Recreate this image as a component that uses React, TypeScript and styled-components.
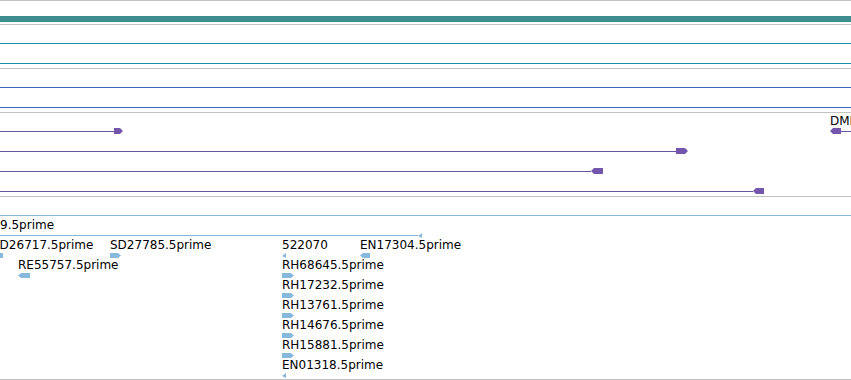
import React from 'react';
import styled, { createGlobalStyle } from 'styled-components';

type Shape = 'right' | 'left' | 'tri' | 'box';

interface Glyph {
    x: number;
    w: number;
    shape: Shape;
}

interface RowData {
    lines?: [number, number][];
    glyphs?: Glyph[];
    labels?: { x: number; text: string }[];
}

interface TrackData {
    id: string;
    color: string;
    glyphColor: string;
    glyphTop: number;
    glyphHeight: number;
    pad: number;
    rows: RowData[];
}

const GlobalStyle = createGlobalStyle`
  html, body {
    margin: 0;
    padding: 0;
    background: #ffffff;
    overflow: hidden;
  }
  body {
    font-family: "DejaVu Sans", "Liberation Sans", sans-serif;
    font-size: 12px;
    color: #000000;
  }
`;

const Browser = styled.div`
  width: 851px;
  height: 380px;
  overflow: hidden;
  display: flex;
  flex-direction: column;
`;

const Track = styled.div<{ $pad: number }>`
  border-top: 1px solid #c2c2c2;
  padding-bottom: ${({ $pad }) => $pad}px;
  display: flex;
  flex-direction: column;
`;

const Row = styled.div`
  position: relative;
  height: 20px;
`;

const Line = styled.div<{ $color: string }>`
  position: absolute;
  top: 18px;
  height: 1px;
  background: ${({ $color }) => $color};
`;

const shapes: Record<Shape, string> = {
    right: 'polygon(0 0, calc(100% - 3px) 0, 100% 50%, calc(100% - 3px) 100%, 0 100%)',
    left: 'polygon(3px 0, 100% 0, 100% 100%, 3px 100%, 0 50%)',
    tri: 'polygon(100% 0, 100% 100%, 0 60%)',
    box: 'none',
};

const Block = styled.div<{ $color: string; $top: number; $h: number; $shape: Shape }>`
  position: absolute;
  top: ${({ $top }) => $top}px;
  height: ${({ $h }) => $h}px;
  background: ${({ $color }) => $color};
  clip-path: ${({ $shape }) => shapes[$shape]};
`;

const Label = styled.span`
  position: absolute;
  top: 1px;
  line-height: 14px;
  white-space: nowrap;
`;

const Bar = styled.div<{ $color: string }>`
  position: absolute;
  left: 0;
  right: 0;
  top: 15px;
  height: 6px;
  background: ${({ $color }) => $color};
`;

const rh = (text: string): RowData => ({
    labels: [{ x: 282, text }],
    glyphs: [{ x: 282, w: 12, shape: 'right' }],
});

const tracks: TrackData[] = [
    {
        id: 'features-a',
        color: '#1d8ea7',
        glyphColor: '#1d8ea7',
        glyphTop: 15,
        glyphHeight: 6,
        pad: 3,
        rows: [{ lines: [[0, 851]] }, { lines: [[0, 851]] }],
    },
    {
        id: 'features-b',
        color: '#3a67b7',
        glyphColor: '#3a67b7',
        glyphTop: 15,
        glyphHeight: 6,
        pad: 3,
        rows: [{ lines: [[0, 851]] }, { lines: [[0, 851]] }],
    },
    {
        id: 'transcripts',
        color: '#6b55a1',
        glyphColor: '#7457ad',
        glyphTop: 15,
        glyphHeight: 6,
        pad: 3,
        rows: [
            {
                lines: [[0, 114], [841, 851]],
                glyphs: [
                    { x: 114, w: 9, shape: 'right' },
                    { x: 830, w: 11, shape: 'left' },
                ],
                labels: [{ x: 830, text: 'DMI' }],
            },
            { lines: [[0, 676]], glyphs: [{ x: 676, w: 12, shape: 'right' }] },
            { lines: [[0, 591]], glyphs: [{ x: 591, w: 12, shape: 'left' }] },
            { lines: [[0, 753]], glyphs: [{ x: 753, w: 11, shape: 'left' }] },
        ],
    },
    {
        id: 'ests',
        color: '#86b9dd',
        glyphColor: '#86b9dd',
        glyphTop: 16,
        glyphHeight: 5,
        pad: 2,
        rows: [
            { lines: [[0, 851]] },
            {
                lines: [[0, 418]],
                glyphs: [{ x: 418, w: 4, shape: 'tri' }],
                labels: [{ x: 0, text: '9.5prime' }],
            },
            {
                labels: [
                    { x: -8, text: 'SD26717.5prime' },
                    { x: 110, text: 'SD27785.5prime' },
                    { x: 282, text: '522070' },
                    { x: 360, text: 'EN17304.5prime' },
                ],
                glyphs: [
                    { x: 0, w: 3, shape: 'box' },
                    { x: 110, w: 11, shape: 'right' },
                    { x: 282, w: 4, shape: 'tri' },
                    { x: 360, w: 10, shape: 'left' },
                ],
            },
            {
                labels: [
                    { x: 18, text: 'RE55757.5prime' },
                    { x: 282, text: 'RH68645.5prime' },
                ],
                glyphs: [
                    { x: 18, w: 12, shape: 'left' },
                    { x: 282, w: 12, shape: 'right' },
                ],
            },
            rh('RH17232.5prime'),
            rh('RH13761.5prime'),
            rh('RH14676.5prime'),
            rh('RH15881.5prime'),
            {
                labels: [{ x: 282, text: 'EN01318.5prime' }],
                glyphs: [{ x: 282, w: 4, shape: 'tri' }],
            },
        ],
    },
];

const FeatureRow: React.FC<{ row: RowData; track: TrackData }> = ({ row, track }) => (
    <Row>
        {row.lines?.map(([a, b], i) => (
            <Line key={`l${i}`} $color={track.color} style={{ left: a, width: b - a }} />
        ))}
        {row.glyphs?.map((g, i) => (
            <Block
                key={`g${i}`}
                $color={track.glyphColor}
                $top={track.glyphTop}
                $h={track.glyphHeight}
                $shape={g.shape}
                style={{ left: g.x, width: g.w }}
            />
        ))}
        {row.labels?.map((l, i) => (
            <Label key={`t${i}`} style={{ left: l.x }}>
                {l.text}
            </Label>
        ))}
    </Row>
);

const App: React.FC = () => (
    <Browser>
        <GlobalStyle />
        <Track $pad={3}>
            <Row>
                <Bar $color="#3f8e8f" />
            </Row>
        </Track>
        {tracks.map(track => (
            <Track key={track.id} $pad={track.pad}>
                {track.rows.map((row, i) => (
                    <FeatureRow key={i} row={row} track={track} />
                ))}
            </Track>
        ))}
        <Track $pad={0} />
    </Browser>
);

export default App;
